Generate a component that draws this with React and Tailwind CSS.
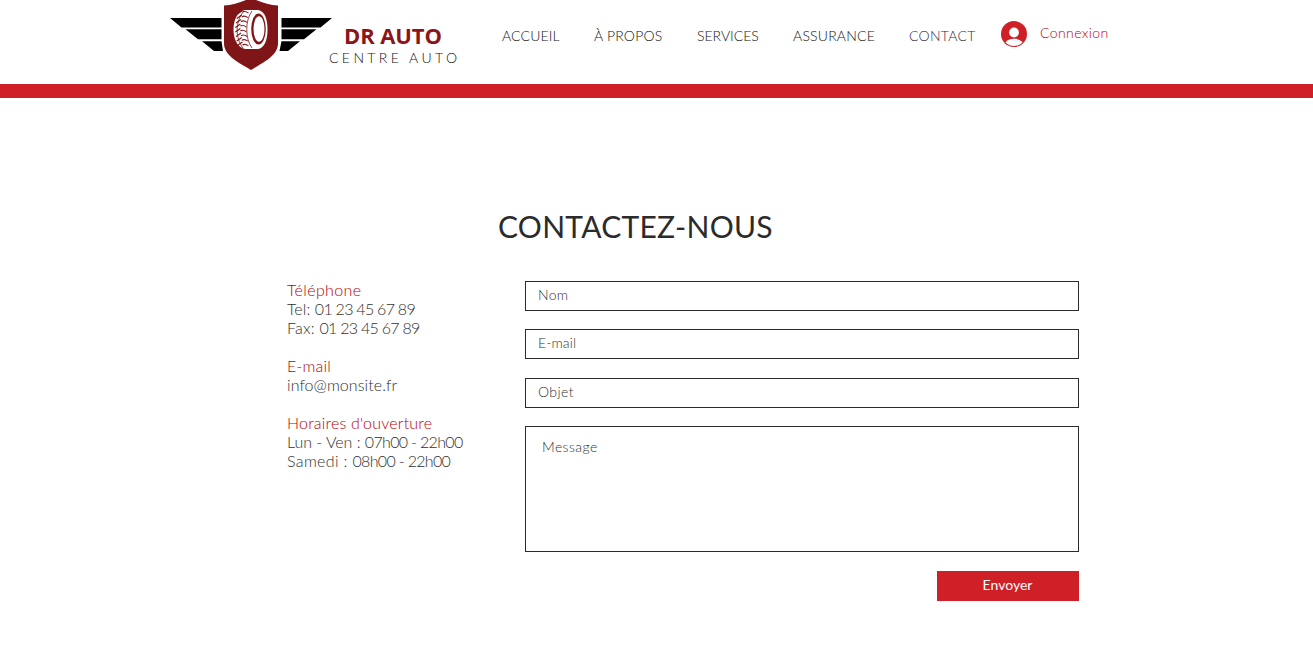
import React from "react";

const treadRows = [0, 1, 2, 3, 4, 5, 6, 7];

function Logo() {
  return (
    <svg width="162" height="70" viewBox="0 0 162 70" className="block shrink-0">
      <path d="M0 18H51.500V27.500H11.500Z M15.500 29.200H51.500V39.300H28Z M32 41.200H51.500L53 51H44Z" fill="#000" />
      <path d="M162 18H111.500V27.500H150.500Z M146.500 29.200H111.500V39.300H134Z M130 41.200H111.500L109.500 51H118Z" fill="#000" />
      <path d="M54 5.500C63 5 73 2 81 -2.500C89 2 99 5 108 5.500V43C108 55 96 61 81 70C66 61 54 55 54 43Z" fill="#801518" />
      <path d="M75 10H88C95 11 97.500 20 97.500 29.500C97.500 41 94 49 87 49H75C67 47 63.500 39 63.500 29.500C63.500 20 67 12 75 10Z" fill="#fff" />
      <ellipse cx="88.500" cy="29" rx="7.300" ry="15.500" fill="#801518" />
      <ellipse cx="89" cy="29" rx="5.500" ry="12.800" fill="#fff" />
      <path d="M74 11C65 21 65 38 73 48 M82 11C75 20 75 39 82 48" fill="none" stroke="#801518" strokeWidth="0.800" />
      {treadRows.map((i) => (
        <path key={i} d={`M${65 + Math.abs(3.5 - i) * 0.7} ${14 + i * 4.5}l5 -3.500 M${70 + Math.abs(3.5 - i) * 0.7} ${12 + i * 4.7}q3 -1.500 6 1`} stroke="#801518" strokeWidth="1.100" fill="none" />
      ))}
    </svg>
  );
}

const links = [
  ["ACCUEIL", "w-[92px] tracking-[0.15px] text-[#101010]"],
  ["À PROPOS", "w-[103px] tracking-[0.2px] text-[#101010]"],
  ["SERVICES", "w-[96px] text-[#101010]"],
  ["ASSURANCE", "w-[116px] tracking-[0.2px] text-[#101010]"],
  ["CONTACT", "w-[92px] tracking-[0.3px] text-[#342840]"],
];

const fields = [
  ["Nom", "mb-[18px] tracking-[0.3px]"],
  ["E-mail", "mb-[19px] tracking-[0.1px]"],
  ["Objet", "mb-[18px] tracking-[0.4px]"],
];

export default function App() {
  return (
    <div className="h-[654px] w-[1313px] overflow-hidden bg-white font-['Lato',sans-serif] font-light">
      <header className="flex h-[84px] pl-[170px]">
        <Logo />
        <div className="w-[170px] pt-[23px] whitespace-nowrap">
          <div className="pl-[12px] font-['Open_Sans',sans-serif] text-[22px] leading-[24px] font-bold tracking-[-0.1px] text-[#8b1518]">DR AUTO</div>
          <div className="-ml-[3px] pt-px text-[14px] leading-[20px] tracking-[3.4px] text-[#101010]">CENTRE AUTO</div>
        </div>
        <nav className="flex pt-[26px] text-[14px] leading-[20px] whitespace-nowrap">
          {links.map(([label, cls]) => (
            <a key={label} className={cls}>{label}</a>
          ))}
        </nav>
        <div className="flex pt-[21px]">
          <svg width="26" height="26" viewBox="0 0 26 26" className="mr-[13px] block">
            <circle cx="13" cy="13" r="13" fill="#cf2027" />
            <circle cx="13" cy="11.500" r="4.900" fill="#fff" />
            <path d="M4.500 21.500C6 19 9 17.800 13 17.800S20 19 21.500 21.500C16.500 26.200 9.500 26.200 4.500 21.500Z" fill="#fff" />
          </svg>
          <span className="pt-[2px] text-[14px] leading-[20px] tracking-[0.4px] text-[#bd0008]">Connexion</span>
        </div>
      </header>
      <div className="h-[14px] bg-[#cf2027]" />
      <h1 className="mt-[108px] mb-px ml-[498px] h-[74px] text-[30px] leading-[40px] font-normal tracking-[0.25px] whitespace-nowrap text-[#2b2b2b]">CONTACTEZ-NOUS</h1>
      <main className="flex pl-[286px]">
        <section className="-mt-px mb-px w-[239px] pl-px text-[16px] leading-[19px] whitespace-nowrap text-[#303030]">
          <h2 className="tracking-[0.35px] text-[#b80008]">Téléphone</h2>
          <p className="tracking-[-0.72px]"><span className="tracking-[0.1px]">Tel: </span>01 23 45 67 89</p>
          <p className="mb-[19px] tracking-[-0.72px]"><span className="tracking-[0.25px]">Fax: </span>01 23 45 67 89</p>
          <h2 className="tracking-[0.15px] text-[#b80008]">E-mail</h2>
          <p className="mb-[19px] tracking-[0.07px]">info@monsite.fr</p>
          <h2 className="tracking-[0.2px] text-[#b80008]">Horaires d'ouverture</h2>
          <p className="tracking-[-0.67px]"><span className="tracking-[-0.03px]">Lun - Ven : </span>07h00 - 22h00</p>
          <p className="tracking-[-0.67px]"><span className="tracking-[0.35px]">Samedi : </span>08h00 - 22h00</p>
        </section>
        <form className="flex w-[554px] flex-col text-[14px]">
          {fields.map(([label, cls]) => (
            <input key={label} placeholder={label} className={`h-[30px] border border-[#2b2b2b] pb-[4px] pl-[12px] placeholder:text-[#303030] ${cls}`} />
          ))}
          <textarea placeholder="Message" className="h-[126px] resize-none border border-[#2b2b2b] pt-[10px] pl-[16px] leading-[20px] tracking-[0.4px] placeholder:text-[#303030]" />
          <button type="button" className="mt-[19px] h-[30px] w-[142px] self-end bg-[#cf2027] pr-px pb-[4px] font-normal text-white">Envoyer</button>
        </form>
      </main>
    </div>
  );
}
